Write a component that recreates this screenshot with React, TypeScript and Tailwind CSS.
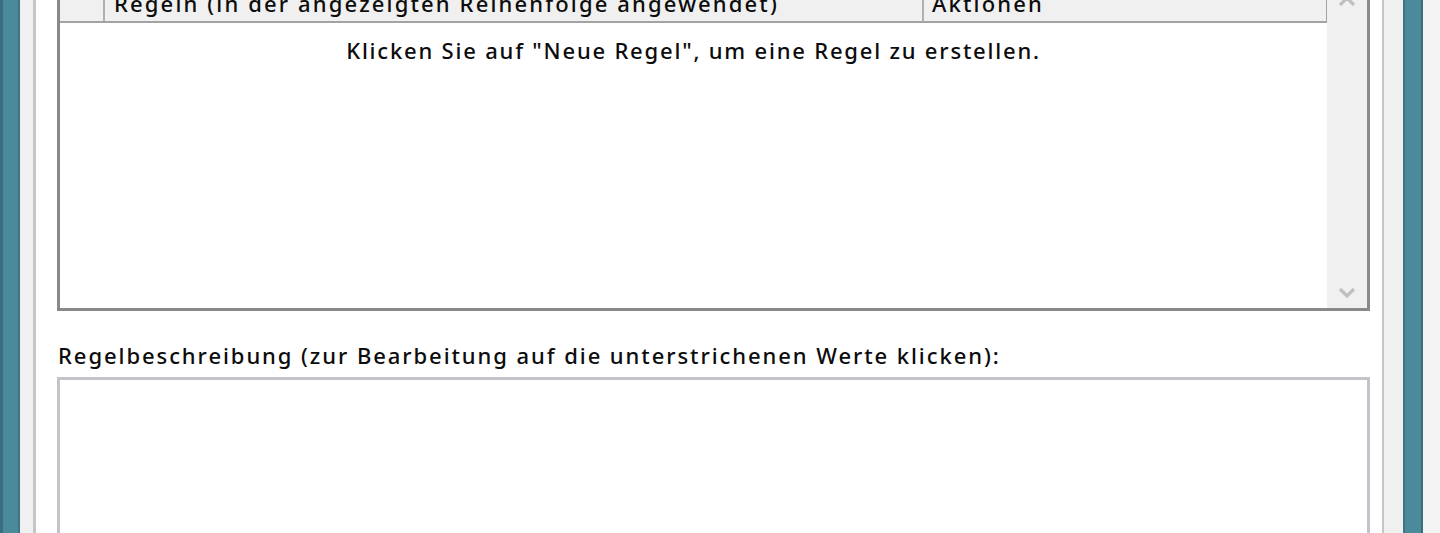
import React from "react";

function Chevron({ up }: { up?: boolean }) {
  return (
    <svg width="18" height="12" viewBox="0 0 18 12" className="block">
      <polyline
        points={up ? "2,10 9,3 16,10" : "2,2 9,9 16,2"}
        fill="none"
        stroke="#c0c0c0"
        strokeWidth="3.2"
      />
    </svg>
  );
}

export default function App() {
  return (
    <div className="flex h-[533px] w-[1440px] overflow-hidden bg-white font-['Noto_Sans',sans-serif] font-medium text-[#0c0c0c]">
      {/* left frame */}
      <div className="w-[20px] shrink-0 border-l-[3px] border-r-[2px] border-l-[#3b6e7c] border-r-[#3f7483] bg-[#4b8a9a]" />
      <div className="w-[13px] shrink-0 bg-[#f0f0f0]" />
      <div className="w-[3px] shrink-0 bg-[#c6c6c6]" />

      {/* dialog content */}
      <div className="flex w-[1346px] shrink-0 flex-col bg-white pl-[21px] pr-[12px]">
        {/* rules list */}
        <div className="-mt-[10px] flex h-[321px] shrink-0 border-[3px] border-[#898989] bg-white">
          <div className="flex flex-1 flex-col">
            <div className="flex h-[30px] shrink-0 border-b-2 border-r border-b-[#a3a3a3] border-r-[#a3a3a3] bg-[#f0f0f0] text-[22px] leading-none tracking-[2.15px]">
              <div className="w-[45px] shrink-0 border-r-2 border-r-[#b0b0b0]" />
              <div className="flex w-[819px] shrink-0 items-center overflow-hidden whitespace-nowrap border-r-2 border-r-[#b0b0b0] pb-[8px] pl-[9px]">
                Regeln (in der angezeigten Reihenfolge angewendet)
              </div>
              <div className="flex flex-1 items-center pb-[8px] pl-[8px]">Aktionen</div>
            </div>
            <div className="flex flex-1 justify-center pt-[13px] text-[22px] leading-[28px] tracking-[1.8px]">
              Klicken Sie auf "Neue Regel", um eine Regel zu erstellen.
            </div>
          </div>
          <div className="flex w-[40px] shrink-0 flex-col items-center justify-between bg-[#f0f0f0] pb-[9px] pt-[2px]">
            <Chevron up />
            <Chevron />
          </div>
        </div>

        <div className="mt-[30px] pl-[1px] text-[22px] leading-[28px] tracking-[1.93px]">
          Regelbeschreibung (zur Bearbeitung auf die unterstrichenen Werte klicken):
        </div>

        <div className="mt-[8px] h-[200px] shrink-0 border-[3px] border-[#c3c3c9] bg-white" />
      </div>

      {/* right frame */}
      <div className="w-[2px] shrink-0 bg-[#c6c6c6]" />
      <div className="w-[19px] shrink-0 bg-[#f0f0f0]" />
      <div className="w-[20px] shrink-0 border-l-[2px] border-r-[2px] border-l-[#3f7483] border-r-[#3b6e7c] bg-[#4b8a9a]" />
      <div className="flex-1 bg-[#f4f4f4]" />
    </div>
  );
}
